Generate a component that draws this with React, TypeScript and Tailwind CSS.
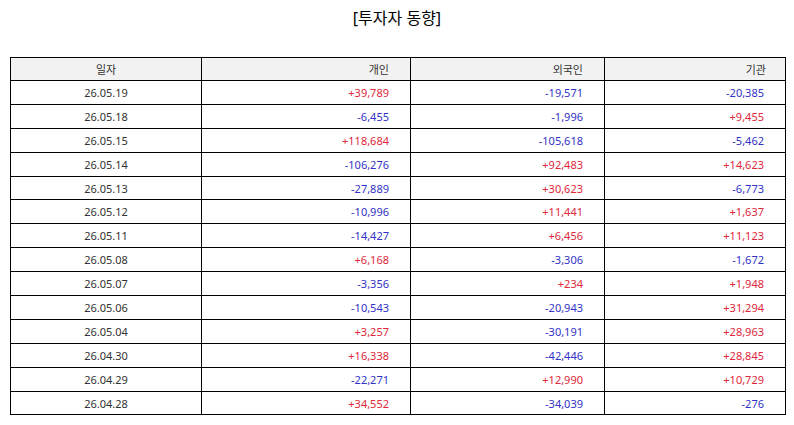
import React from "react";

type Row = { date: string; indiv: string; foreign: string; inst: string };

const rows: Row[] = [
  { date: "26.05.19", indiv: "+39,789", foreign: "-19,571", inst: "-20,385" },
  { date: "26.05.18", indiv: "-6,455", foreign: "-1,996", inst: "+9,455" },
  { date: "26.05.15", indiv: "+118,684", foreign: "-105,618", inst: "-5,462" },
  { date: "26.05.14", indiv: "-106,276", foreign: "+92,483", inst: "+14,623" },
  { date: "26.05.13", indiv: "-27,889", foreign: "+30,623", inst: "-6,773" },
  { date: "26.05.12", indiv: "-10,996", foreign: "+11,441", inst: "+1,637" },
  { date: "26.05.11", indiv: "-14,427", foreign: "+6,456", inst: "+11,123" },
  { date: "26.05.08", indiv: "+6,168", foreign: "-3,306", inst: "-1,672" },
  { date: "26.05.07", indiv: "-3,356", foreign: "+234", inst: "+1,948" },
  { date: "26.05.06", indiv: "-10,543", foreign: "-20,943", inst: "+31,294" },
  { date: "26.05.04", indiv: "+3,257", foreign: "-30,191", inst: "+28,963" },
  { date: "26.04.30", indiv: "+16,338", foreign: "-42,446", inst: "+28,845" },
  { date: "26.04.29", indiv: "-22,271", foreign: "+12,990", inst: "+10,729" },
  { date: "26.04.28", indiv: "+34,552", foreign: "-34,039", inst: "-276" },
];

function Num({ v }: { v: string }) {
  const up = v.startsWith("+");
  return (
    <td
      className={
        "border-[1.5px] border-black pr-[21px] text-right " +
        (up ? "text-[#e0283a]" : "text-[#3232c8]")
      }
    >
      {v}
    </td>
  );
}

export default function App() {
  return (
    <div
      className="w-[794px] h-[425px] bg-white text-[#333]"
      style={{ fontFamily: '"Noto Sans", "Noto Sans CJK KR", sans-serif' }}
    >
      <h1 className="pt-[4px] h-[57px] text-center text-[16px] leading-[28px] text-black">
        [투자자 동향]
      </h1>
      <div className="px-[10px]">
        <table className="w-[775px] table-fixed border-collapse text-[11px] leading-none">
          <colgroup>
            <col className="w-[191px]" />
            <col className="w-[209px]" />
            <col className="w-[194px]" />
            <col className="w-[181px]" />
          </colgroup>
          <thead>
            <tr className="h-[23px] bg-[#f2f2f2]">
              <th className="border-[1.5px] border-black font-normal text-center">일자</th>
              <th className="border-[1.5px] border-black font-normal text-right pr-[21px]">개인</th>
              <th className="border-[1.5px] border-black font-normal text-right pr-[21px]">외국인</th>
              <th className="border-[1.5px] border-black font-normal text-right pr-[19px]">기관</th>
            </tr>
          </thead>
          <tbody>
            {rows.map((r) => (
              <tr key={r.date} className="h-[23.9px]">
                <td className="border-[1.5px] border-black text-center">{r.date}</td>
                <Num v={r.indiv} />
                <Num v={r.foreign} />
                <Num v={r.inst} />
              </tr>
            ))}
          </tbody>
        </table>
      </div>
    </div>
  );
}
